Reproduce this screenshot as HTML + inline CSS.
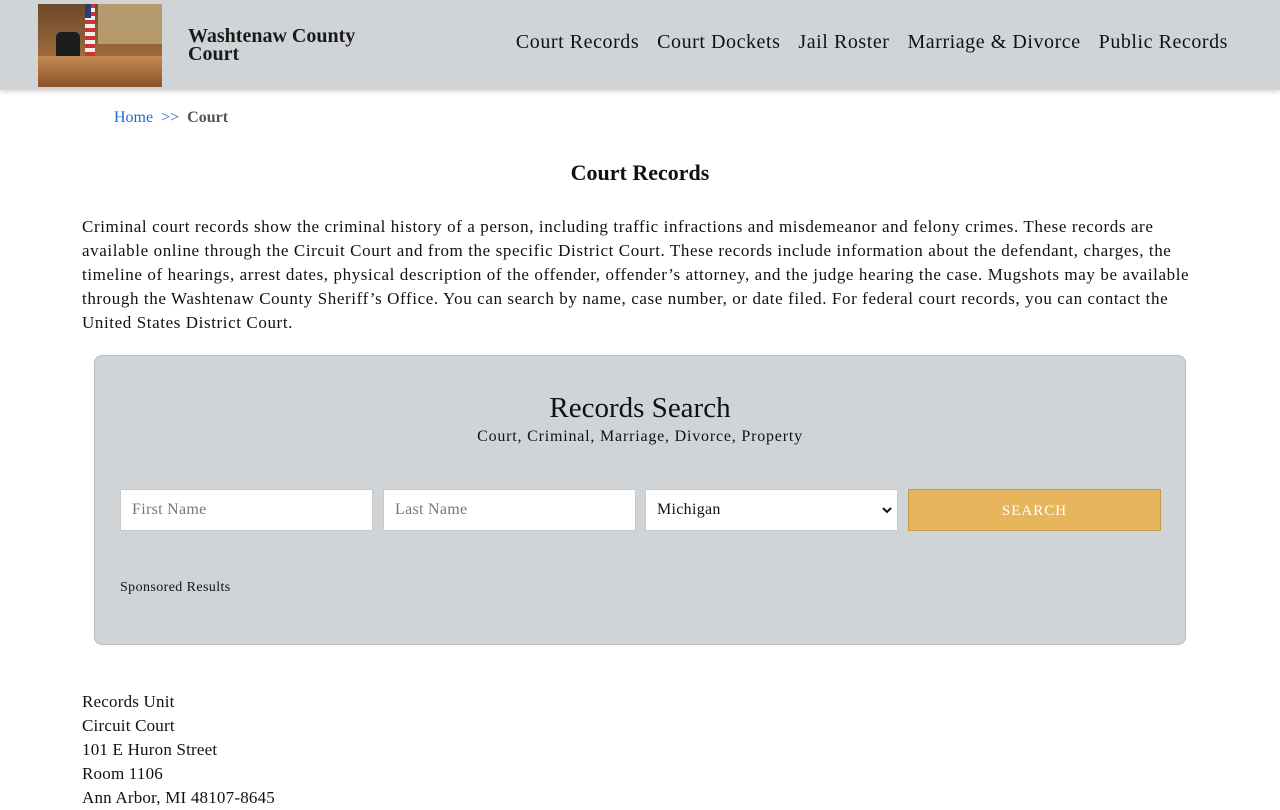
<!DOCTYPE html>
<html><head><meta charset="utf-8"><style>
*{margin:0;padding:0;box-sizing:border-box}
body{width:1280px;height:800px;overflow:hidden;background:#fff;font-family:"Liberation Serif","DejaVu Serif",serif;color:#111}
.hdr{position:absolute;left:0;top:0;width:1280px;height:90px;background:#d1d4d7;box-shadow:0 2px 4px rgba(0,0,0,.15)}
.logo{position:absolute;left:38px;top:4px;width:124px;height:83px;background:linear-gradient(180deg,#6b4a2c 0%,#8a5d35 40%,#a06a3c 60%,#7a4b26 100%);overflow:hidden}
.logo .wall{position:absolute;left:60px;top:0;width:64px;height:40px;background:#b59a6e}
.logo .desk{position:absolute;left:0;top:52px;width:124px;height:31px;background:linear-gradient(#c58a54,#8a5228)}
.logo .chair{position:absolute;left:18px;top:28px;width:24px;height:30px;background:#1b1d1f;border-radius:5px}
.logo .flag{position:absolute;left:47px;top:0;width:10px;height:56px;background:repeating-linear-gradient(#c33 0 4px,#eee 4px 8px)}
.logo .flag:before{content:"";position:absolute;left:0;top:0;width:6px;height:14px;background:#2a3d7a}
.title{position:absolute;left:188px;top:27px;font-size:20px;font-weight:bold;line-height:18px;color:#1a1a1a}
.nav{position:absolute;right:52px;top:31px;font-size:20px;display:flex;gap:18px;color:#111;letter-spacing:0.55px}
.bc{position:absolute;left:114px;top:109px;font-size:16px}
.bc a{color:#1a6bd1;text-decoration:none}
.bc b{color:#555}
h1{position:absolute;left:0;width:1280px;top:160px;text-align:center;font-size:22px;font-weight:bold}
.p{position:absolute;left:82px;top:215px;width:1150px;font-size:17px;line-height:24px;letter-spacing:0.6px;white-space:nowrap}
.box{position:absolute;left:94px;top:355px;width:1092px;height:290px;background:#d1d4d7;border:1px solid #b9bcbf;border-radius:8px}
.box h2{position:absolute;top:36px;width:100%;text-align:center;font-size:29px;font-weight:normal}
.box .sub{position:absolute;top:72px;width:100%;text-align:center;font-size:16px;letter-spacing:0.8px}
.in{position:absolute;top:133px;width:253px;height:42px;background:#fff;border:1px solid #c8c8c8;font-size:16px;color:#777;padding:11px 11px;letter-spacing:0.3px}
.btn{position:absolute;top:133px;left:813px;width:253px;height:42px;background:#e6b55c;border:1px solid #c99a45;color:#fff;text-align:center;font-size:15px;letter-spacing:1px;padding-top:13px}
.sp{position:absolute;left:25px;top:224px;font-size:14px;letter-spacing:0.4px}
.addr{position:absolute;left:82px;top:690px;font-size:17px;line-height:24px;letter-spacing:0.2px}
</style></head><body>
<div class="hdr">
<div class="logo"><div class="wall"></div><div class="flag"></div><div class="chair"></div><div class="desk"></div></div>
<div class="title">Washtenaw County<br>Court</div>
<div class="nav"><span>Court Records</span><span>Court Dockets</span><span>Jail Roster</span><span>Marriage &amp; Divorce</span><span>Public Records</span></div>
</div>
<div class="bc"><a>Home</a> &nbsp;<a>&gt;&gt;</a>&nbsp; <b>Court</b></div>
<h1>Court Records</h1>
<div class="p">Criminal court records show the criminal history of a person, including traffic infractions and misdemeanor and felony crimes. These records are<br>available online through the Circuit Court and from the specific District Court. These records include information about the defendant, charges, the<br>timeline of hearings, arrest dates, physical description of the offender, offender’s attorney, and the judge hearing the case. Mugshots may be available<br>through the Washtenaw County Sheriff’s Office. You can search by name, case number, or date filed. For federal court records, you can contact the<br>United States District Court.</div>
<div class="box">
<h2>Records Search</h2>
<div class="sub">Court, Criminal, Marriage, Divorce, Property</div>
<div class="in" style="left:25px">First Name</div>
<div class="in" style="left:288px">Last Name</div>
<div class="in" style="left:550px;color:#111">Michigan<svg style="position:absolute;right:5px;top:16px" width="10" height="8" viewBox="0 0 10 8"><path d="M1 2l4 4 4-4" stroke="#111" stroke-width="2" fill="none"/></svg></div>
<div class="btn">SEARCH</div>
<div class="sp">Sponsored Results</div>
</div>
<div class="addr">Records Unit<br>Circuit Court<br>101 E Huron Street<br>Room 1106<br>Ann Arbor, MI 48107-8645</div>
</body></html>
